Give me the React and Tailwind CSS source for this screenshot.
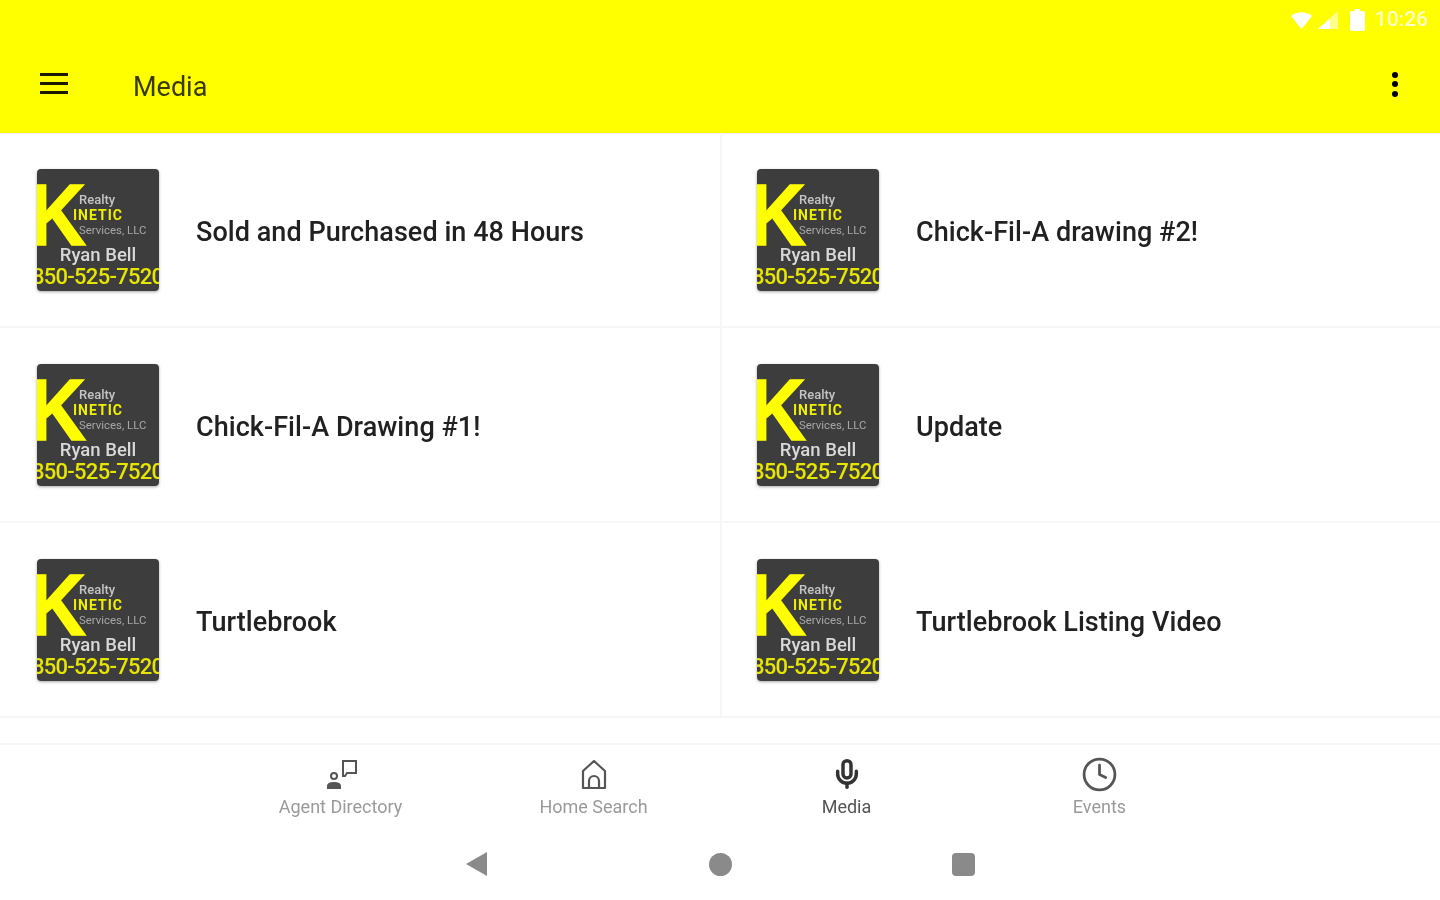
import React from 'react';
import { Mic, Clock } from 'lucide-react';

const items = [
  'Sold and Purchased in 48 Hours',
  'Chick-Fil-A drawing #2!',
  'Chick-Fil-A Drawing #1!',
  'Update',
  'Turtlebrook',
  'Turtlebrook Listing Video',
];

function Logo() {
  return (
    <svg width="122" height="122" viewBox="0 0 122 122" className="shrink-0 rounded-sm shadow-[0_1px_3px_rgba(0,0,0,0.35)] blur-[0.6px]">
      <rect width="122" height="122" fill="#3d3d3d" />
      <text x="-8" y="76" textLength="57" lengthAdjust="spacingAndGlyphs" fontFamily="Liberation Sans" fontWeight="700" fontSize="87" fill="#ffff00" stroke="#ffff00" strokeWidth="1.5">K</text>
      <text x="42" y="35" fontFamily="Roboto" fontWeight="500" fontSize="13" fill="#c4c4c4">Realty</text>
      <text x="36" y="51" fontFamily="Roboto" fontWeight="700" fontSize="14" letterSpacing="1" fill="#f0f000">INETIC</text>
      <text x="42" y="65" fontFamily="Roboto" fontSize="11.4" fill="#a8a8a8">Services, LLC</text>
      <text x="61" y="92" textAnchor="middle" fontFamily="Roboto" fontWeight="500" fontSize="18.5" fill="#d8d8d8">Ryan Bell</text>
      <text x="-5" y="115" textLength="132" fontFamily="Roboto" fontWeight="500" fontSize="22" fill="#e6e600">850-525-7520</text>
    </svg>
  );
}

function AgentIcon() {
  return (
    <svg width="32" height="32" viewBox="0 0 32 32" fill="none" stroke="#555" strokeWidth="2">
      <circle cx="9" cy="18" r="3" />
      <path d="M3 30v-2c0-2 3-3 6-3s6 1 6 3v2z" fill="#555" />
      <path d="M18 3h13v12h-9l-2 3h-2z" />
    </svg>
  );
}

function HomeIcon() {
  return (
    <svg width="32" height="32" viewBox="0 0 32 32" fill="none" stroke="#555" strokeWidth="2.2" strokeLinejoin="round">
      <path d="M5 30V13L16 3l11 10v17z" />
      <path d="M11 30v-7a5 5 0 0 1 10 0v7" />
    </svg>
  );
}

function ListRow({ title, right }) {
  return (
    <div className={`h-[195px] flex items-center gap-[37px] border-b-2 border-[#f6f6f6] ${right ? 'pl-[35px]' : 'pl-[37px] border-r-2'}`}>
      <Logo />
      <span className="pt-[6px] font-['Roboto',sans-serif] font-medium text-[27px] tracking-[0.05px] text-[#212121] blur-[0.5px]">{title}</span>
    </div>
  );
}

function NavItem({ icon, label, active }) {
  return (
    <div className={`w-[253px] flex flex-col items-center font-['Roboto',sans-serif] text-[18px] leading-5 ${active ? 'text-[#555]' : 'text-[#9a9a9a]'}`}>
      <div className="h-[32px] flex items-center justify-center mb-[7px]">{icon}</div>
      <span>{label}</span>
    </div>
  );
}

export default function App() {
  return (
    <div className="w-[1440px] h-[900px] overflow-hidden bg-white flex flex-col">
      <div className="bg-[#ffff00] h-[133px] shadow-[0_1px_2px_rgba(0,0,0,0.08)] flex flex-col">
        <div className="h-[40px] flex items-center justify-end pr-[12px] text-white blur-[0.5px]">
          <svg width="21" height="17" viewBox="0 0 21 17" fill="#fff"><path d="M0 4C6-1 15-1 21 4L10.500 17z" /></svg>
          <svg width="20" height="18" viewBox="0 0 20 18" fill="#fff" className="ml-[6px]"><path d="M20 0v18H0z" fillOpacity="0.55" /><path d="M12 8v10H0z" /></svg>
          <svg width="15" height="22" viewBox="0 0 15 22" fill="#fff" className="ml-[12px]"><path d="M5 0h5v2h3a2 2 0 0 1 2 2v16a2 2 0 0 1-2 2H2a2 2 0 0 1-2-2V4a2 2 0 0 1 2-2h3z" /></svg>
          <span className="ml-[10px] font-['Roboto',sans-serif] font-medium text-[21px] opacity-80">10:26</span>
        </div>
        <div className="flex-1 flex items-center pl-[40px] pr-[42px] blur-[0.5px]">
          <div className="w-[28px] flex flex-col gap-[6px] mb-[7px]">
            <div className="h-[3px] bg-[#1a1a00]" />
            <div className="h-[3px] bg-[#1a1a00]" />
            <div className="h-[3px] bg-[#1a1a00]" />
          </div>
          <span className="ml-[65px] pt-[1px] font-['Roboto',sans-serif] text-[27px] text-[#3a3a00]">Media</span>
          <div className="ml-auto flex flex-col gap-[3.500px] mb-[5px]">
            <div className="w-[6px] h-[6px] rounded-full bg-black" />
            <div className="w-[6px] h-[6px] rounded-full bg-black" />
            <div className="w-[6px] h-[6px] rounded-full bg-black" />
          </div>
        </div>
      </div>

      <div className="grid grid-cols-[722px_1fr]">
        {items.map((title, i) => (
          <ListRow key={title} title={title} right={i % 2 === 1} />
        ))}
      </div>

      <div className="mt-[25px] border-t-2 border-[#f6f6f6] flex-1 flex flex-col">
        <div className="flex justify-center pt-[13px] blur-[0.5px]">
          <NavItem icon={<AgentIcon />} label="Agent Directory" />
          <NavItem icon={<HomeIcon />} label="Home Search" />
          <NavItem icon={<Mic size={32} strokeWidth={2.6} className="text-[#333]" />} label="Media" active />
          <NavItem icon={<Clock size={37} strokeWidth={1.8} className="text-[#555]" />} label="Events" />
        </div>
        <div className="flex justify-center items-center gap-[220px] mt-[35px] blur-[0.5px]">
          <svg width="24" height="24" viewBox="0 0 24 24" fill="#8a8a8a"><path d="M22 0v24L1 12z" /></svg>
          <div className="w-[23px] h-[23px] rounded-full bg-[#8a8a8a]" />
          <div className="w-[23px] h-[23px] rounded-sm bg-[#8a8a8a]" />
        </div>
      </div>
    </div>
  );
}
